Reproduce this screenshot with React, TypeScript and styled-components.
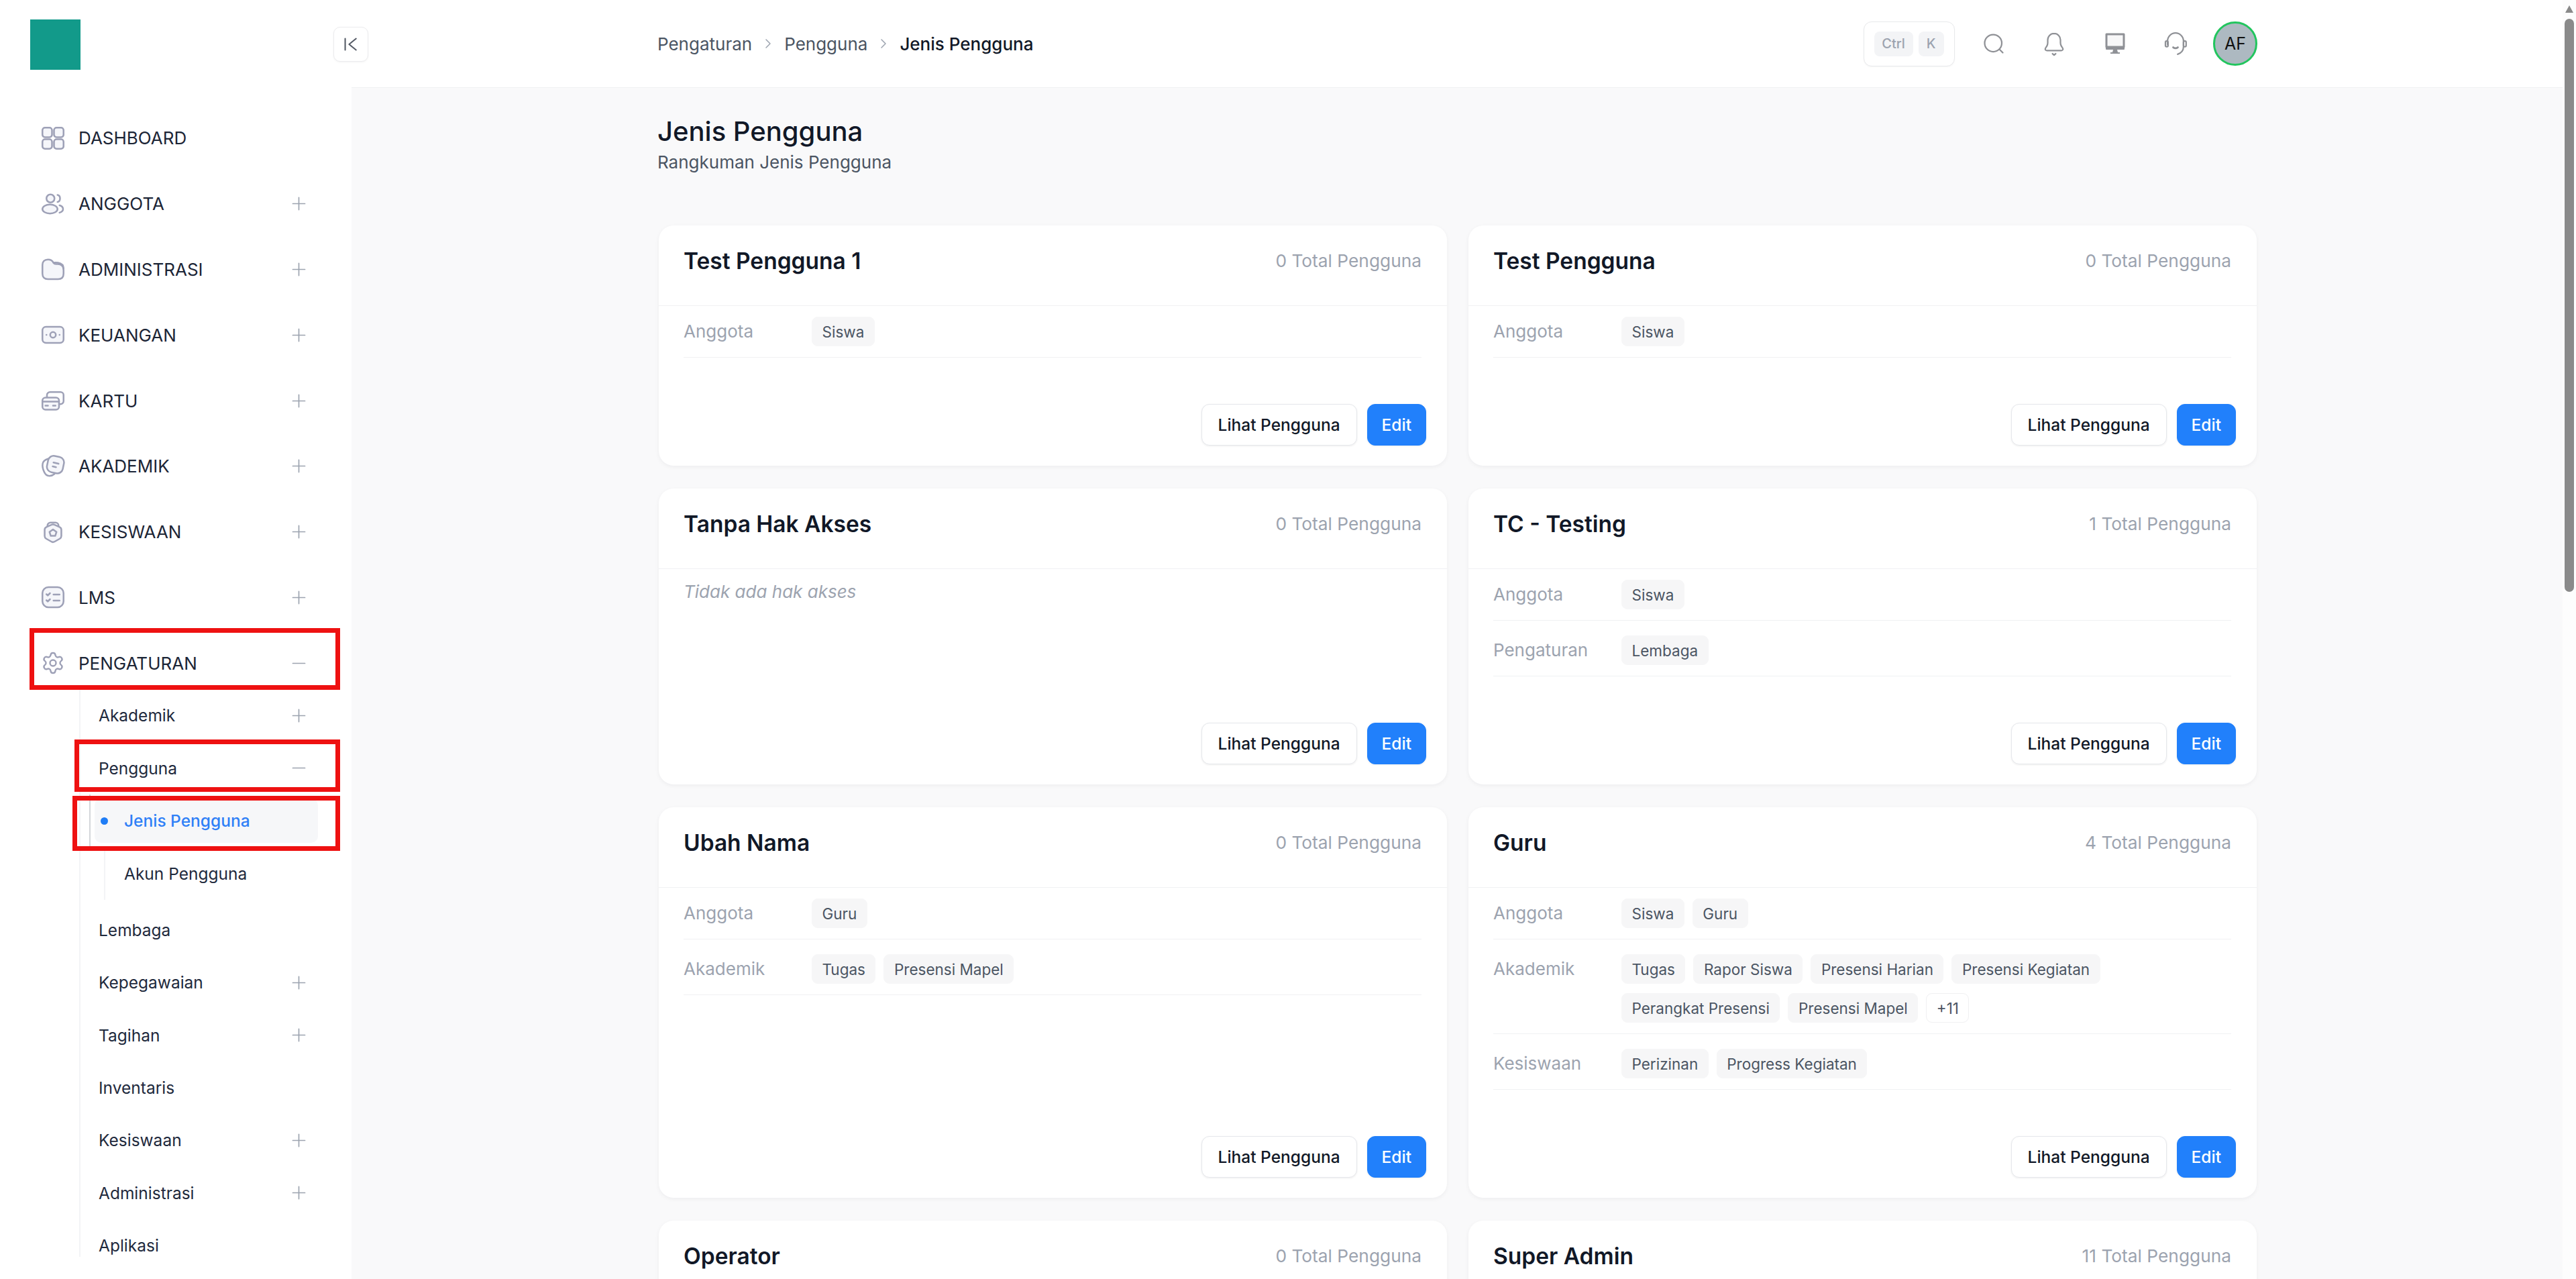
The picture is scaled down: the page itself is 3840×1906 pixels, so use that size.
import React from 'react';
import styled, { createGlobalStyle } from 'styled-components';
import { ChevronRight, Minus, Plus, Settings } from 'lucide-react';

const Global = createGlobalStyle`
  html, body { margin: 0; padding: 0; background: #f9f9fa; }
  body { font-family: Inter, "Noto Sans", sans-serif; color: #1f2937; overflow: hidden; }
  * { box-sizing: border-box; }
`;

const Page = styled.div`
  display: flex;
  width: 3840px;
  height: 1906px;
  overflow: hidden;
  background: #f9f9fa;
`;

const Sidebar = styled.aside`
  position: relative;
  flex: none;
  width: 524px;
  height: 1906px;
  background: #fff;
  z-index: 2;
`;

const LogoArea = styled.div`
  height: 157px;
  padding: 29px 0 0 45px;
`;

const Logo = styled.div`
  width: 75px;
  height: 75px;
  background: #129a8a;
`;

const Collapse = styled.button`
  position: absolute;
  left: 497px;
  top: 40px;
  width: 52px;
  height: 52px;
  padding: 0;
  display: flex;
  align-items: center;
  justify-content: center;
  background: #fff;
  border: 1px solid #ececee;
  border-radius: 10px;
  box-shadow: 0 1px 3px rgba(0, 0, 0, 0.05);
`;

const MenuRow = styled.div`
  display: flex;
  align-items: center;
  height: 97.8px;
  padding: 0 70px 0 61px;
  gap: 20px;
`;

const MenuIcon = styled.span`
  flex: none;
  width: 36px;
  height: 36px;
  display: flex;
  color: #9ea1b7;
`;

const MenuLabel = styled.span`
  flex: 1;
  font-size: 26px;
  color: #1c2536;
`;

const Toggle = styled.span`
  flex: none;
  width: 18px;
  height: 18px;
  display: flex;
  align-items: center;
  justify-content: center;
  color: #9ca3af;

  svg {
    flex: none;
  }
`;

const SubList = styled.div`
  margin: -10px 0 0 118px;
  height: 846px;
  border-left: 2px solid #f3f4f6;
`;

const SubRow = styled.div`
  display: flex;
  align-items: center;
  height: 78.4px;
  padding: 0 70px 0 27px;
`;

const SubLabel = styled.span`
  flex: 1;
  font-size: 24.5px;
  color: #1f2a3d;
`;

const NestedList = styled.div`
  margin-bottom: 6px;
`;

const ActiveWrap = styled.div`
  height: 78.4px;
  margin-left: 13px;
  padding: 6px 0 6px 6px;
  border-left: 2px solid #d4d6da;
  width: 340px;
`;

const ActivePill = styled.div`
  display: flex;
  align-items: center;
  height: 100%;
  width: 333px;
  padding-left: 9px;
  background: #f6f7f9;
  border-radius: 10px;
`;

const ActiveDot = styled.span`
  flex: none;
  width: 11px;
  height: 11px;
  border-radius: 50%;
  background: #1f7df6;
  margin-right: 24px;
`;

const ActiveLabel = styled.span`
  font-size: 24.5px;
  font-weight: 500;
  color: #2f80f7;
`;

const NestedRow = styled.div`
  display: flex;
  align-items: center;
  height: 78.4px;
  margin-left: 35px;
  padding-left: 28px;
  border-left: 2px solid #f3f4f6;
  font-size: 24.5px;
  color: #1f2a3d;
`;

const RedBox = styled.div<{ $x: number; $y: number; $w: number; $h: number }>`
  position: absolute;
  left: ${(p) => p.$x}px;
  top: ${(p) => p.$y}px;
  width: ${(p) => p.$w}px;
  height: ${(p) => p.$h}px;
  border: 7px solid #ee1111;
  pointer-events: none;
`;

const Main = styled.main`
  flex: 1;
  min-width: 0;
  height: 1906px;
  overflow: hidden;
`;

const Header = styled.header`
  display: flex;
  align-items: center;
  height: 131px;
  padding: 0 455px 0 456px;
  background: #fff;
  border-bottom: 1px solid #f0f1f2;
`;

const Crumbs = styled.nav`
  flex: 1;
  display: flex;
  align-items: center;
  gap: 12px;
`;

const Crumb = styled.span<{ $current?: boolean }>`
  font-size: 26px;
  font-weight: ${(p) => (p.$current ? 500 : 400)};
  color: ${(p) => (p.$current ? '#111827' : '#4b5563')};
`;

const CrumbSep = styled.span`
  display: flex;
  color: #9ca3af;
`;

const Actions = styled.div`
  display: flex;
  align-items: center;
  gap: 25.5px;
`;

const KeyHint = styled.div`
  display: flex;
  align-items: center;
  gap: 8px;
  width: 136px;
  height: 67px;
  padding: 0 15px;
  background: #fff;
  border: 1px solid #e8e9eb;
  border-radius: 12px;
  box-shadow: 0 1px 2px rgba(0, 0, 0, 0.04);
`;

const Key = styled.kbd<{ $w: number }>`
  width: ${(p) => p.$w}px;
  height: 37px;
  display: flex;
  align-items: center;
  justify-content: center;
  background: #f3f4f6;
  border-radius: 8px;
  font-family: Inter, sans-serif;
  font-size: 20px;
  font-weight: 500;
  color: #9ca3af;
`;

const IconButton = styled.span`
  width: 65px;
  height: 40px;
  display: flex;
  align-items: center;
  justify-content: center;
  color: #8f9196;
`;

const Avatar = styled.div`
  width: 66px;
  height: 66px;
  margin-left: -2px;
  display: flex;
  align-items: center;
  justify-content: center;
  border-radius: 50%;
  background: #adb9c1;
  border: 3px solid #22c55e;
  font-size: 25px;
  color: #111;
`;

const Content = styled.div`
  padding: 37px 454px 0 456px;
`;

const Title = styled.h1`
  margin: 0;
  font-size: 40px;
  line-height: 56px;
  font-weight: 500;
  color: #111827;
`;

const Subtitle = styled.p`
  margin: 0 0 76px;
  font-size: 26px;
  line-height: 36px;
  color: #4b5563;
`;

const Grid = styled.div`
  display: grid;
  grid-template-columns: 1175px 1175px;
  gap: 34px 32px;
  margin-left: 2px;
`;

const Card = styled.section`
  display: flex;
  flex-direction: column;
  background: #fff;
  border-radius: 22px;
  box-shadow: 0 2px 6px rgba(17, 24, 39, 0.05);
`;

const CardHead = styled.div`
  display: flex;
  align-items: flex-start;
  justify-content: space-between;
  height: 120px;
  padding: 32px 38px 0 37px;
  border-bottom: 1px solid #f0f1f3;
`;

const CardTitle = styled.h2`
  margin: 0;
  font-size: 33.5px;
  line-height: 42px;
  font-weight: 600;
  color: #111827;
`;

const CardCount = styled.span`
  font-size: 26.3px;
  line-height: 42px;
  color: #9ca3af;
`;

const CardBody = styled.div`
  flex: 1;
  display: flex;
  flex-direction: column;
  gap: 22px;
  padding: 16px 38px 0 37px;
`;

const PermRow = styled.div`
  display: flex;
  align-items: flex-start;
  padding-bottom: 16px;
  border-bottom: 1px solid #f0f1f3;
`;

const PermLabel = styled.span`
  flex: none;
  width: 191px;
  font-size: 26px;
  line-height: 44px;
  color: #9ca3af;
`;

const Chips = styled.div`
  display: flex;
  flex-wrap: wrap;
  gap: 14px 12px;
`;

const Chip = styled.span<{ $more?: boolean }>`
  height: 44px;
  padding: 0 14.5px;
  display: flex;
  align-items: center;
  border-radius: 9px;
  font-size: 22.5px;
  color: #4b5563;
  background: ${(p) => (p.$more ? '#fff' : '#f6f6f7')};
  border: 1px solid ${(p) => (p.$more ? '#f0f0f2' : '#f6f6f7')};
`;

const Empty = styled.em`
  margin-top: 2px;
  font-size: 26px;
  line-height: 32px;
  color: #9ca3af;
`;

const CardFoot = styled.div`
  display: flex;
  justify-content: flex-end;
  gap: 15px;
  padding: 69px 31px 30px 0;
`;

const Button = styled.button<{ $primary?: boolean }>`
  height: 62px;
  padding: 0 ${(p) => (p.$primary ? 21 : 24)}px;
  border-radius: 12px;
  font-family: Inter, sans-serif;
  font-size: 24.5px;
  font-weight: 500;
  color: ${(p) => (p.$primary ? '#fff' : '#111827')};
  background: ${(p) => (p.$primary ? '#2180fb' : '#fff')};
  border: 1px solid ${(p) => (p.$primary ? '#2180fb' : '#e5e7eb')};
  box-shadow: 0 1px 3px rgba(0, 0, 0, 0.07);
`;

const ScrollTrack = styled.div`
  position: relative;
  flex: none;
  width: 20px;
  height: 1906px;
  background: #fdfdfd;
`;

const ScrollArrow = styled.div`
  position: absolute;
  left: 4px;
  top: 8px;
  width: 0;
  height: 0;
  border-left: 6px solid transparent;
  border-right: 6px solid transparent;
  border-bottom: 11px solid #8a8a8a;
`;

const ScrollThumb = styled.div`
  position: absolute;
  left: 3px;
  top: 28px;
  width: 14px;
  height: 854px;
  border-radius: 7px;
  background: #8a8a8a;
`;

type SvgProps = { children: React.ReactNode; size?: number; sw?: number };
const Svg = ({ children, size = 36, sw = 1.7 }: SvgProps) => (
  <svg width={size} height={size} viewBox="0 0 24 24" fill="none" stroke="currentColor" strokeWidth={sw} strokeLinecap="round" strokeLinejoin="round">
    {children}
  </svg>
);

const tint = '#f5f6fa';

const icons: Record<string, React.ReactNode> = {
  dashboard: (
    <Svg>
      <rect x="1.5" y="1.5" width="9.5" height="9.5" rx="2.5" fill={tint} />
      <rect x="13" y="1.5" width="9.5" height="9.5" rx="2.5" fill={tint} />
      <rect x="1.5" y="13" width="9.5" height="9.5" rx="2.5" fill={tint} />
      <rect x="13" y="13" width="9.5" height="9.5" rx="2.5" fill={tint} />
    </Svg>
  ),
  users: (
    <Svg>
      <circle cx="9.5" cy="6.5" r="4" fill={tint} />
      <ellipse cx="9" cy="17" rx="7.5" ry="4.5" fill={tint} />
      <path d="M16.5 3c1.5.3 2.5 1.8 2.5 3.5S18 9.700 16.500 10" />
      <path d="M18.500 13.300c2 .6 3.500 2 3.500 3.700s-1.500 3-3.500 3.600" />
    </Svg>
  ),
  folder: (
    <Svg>
      <path d="M1.500 8C1.500 4.500 3.500 2.500 7 2.500c2.800 0 4.200.8 5.500 3.200.6 1 1.200 1.300 2.500 1.300h1.500c4 0 6 2 6 6v3.500c0 3.500-2 5.500-5.500 5.500H7c-3.500 0-5.500-2-5.500-5.500z" fill={tint} />
      <path d="M12.500 5.700c1.500-.3 3-.2 4.500 0 3 .5 5.500 2.300 5.500 5.800" />
    </Svg>
  ),
  money: (
    <Svg>
      <rect x="1.500" y="4" width="21" height="16" rx="3.500" fill={tint} />
      <circle cx="12" cy="12" r="2.800" />
      <path d="M5.500 12h.01M18.500 12h.01" />
    </Svg>
  ),
  cards: (
    <Svg>
      <path d="M6 9V6.500a3 3 0 0 1 3-3h10.500a3 3 0 0 1 3 3v6a3 3 0 0 1-3 3H18" />
      <rect x="1.500" y="9" width="16.500" height="12" rx="3" fill={tint} />
      <path d="M1.500 13h16.500M4.500 17h2.500M12 17h2.500" />
    </Svg>
  ),
  academic: (
    <Svg>
      <path d="M7 4.500C4 5.500 2 7 1.700 9.500c-.3 2 .2 5 1.300 7.500 1 2.500 3 4.500 5.500 4.500 2 0 3.500-.7 5-2" />
      <rect x="6.500" y="2" width="16" height="16.500" rx="5.500" transform="rotate(12 14.500 10)" fill={tint} />
      <path d="M12.500 8.200l5 1.200M11.700 12l3.300.8" />
    </Svg>
  ),
  student: (
    <Svg>
      <path d="M6.500 6.500V5.500a3 3 0 0 1 3-3h5a3 3 0 0 1 3 3v1" />
      <path d="M10.300 4.700a4 4 0 0 1 3.400 0l4.800 2.200a3 3 0 0 1 1.800 2.700v6.300a3 3 0 0 1-1.500 2.600l-5.300 3a3 3 0 0 1-3 0l-5.300-3a3 3 0 0 1-1.500-2.600V9.600a3 3 0 0 1 1.800-2.700z" fill={tint} />
      <path d="M12 9.300l3.500 2.500-1.300 3.900H9.800l-1.300-3.900z" />
    </Svg>
  ),
  lms: (
    <Svg>
      <rect x="1.500" y="2" width="21" height="20" rx="6" fill={tint} />
      <path d="M5.500 9l1.300 1.300L9 8M5.500 15l1.300 1.300L9 14M12.500 9.300h6M12.500 15.300h6" />
    </Svg>
  ),
};

const mainItems: [string, string, boolean][] = [
  ['dashboard', 'DASHBOARD', false],
  ['users', 'ANGGOTA', true],
  ['folder', 'ADMINISTRASI', true],
  ['money', 'KEUANGAN', true],
  ['cards', 'KARTU', true],
  ['academic', 'AKADEMIK', true],
  ['student', 'KESISWAAN', true],
  ['lms', 'LMS', true],
];

const tailItems: [string, boolean][] = [
  ['Lembaga', false],
  ['Kepegawaian', true],
  ['Tagihan', true],
  ['Inventaris', false],
  ['Kesiswaan', true],
  ['Administrasi', true],
  ['Aplikasi', false],
];

type CardData = {
  name: string;
  total: number;
  rows: [string, string[], string?][];
  empty?: boolean;
  belowFold?: boolean;
};

const cards: CardData[] = [
  { name: 'Test Pengguna 1', total: 0, rows: [['Anggota', ['Siswa']]] },
  { name: 'Test Pengguna', total: 0, rows: [['Anggota', ['Siswa']]] },
  { name: 'Tanpa Hak Akses', total: 0, rows: [], empty: true },
  { name: 'TC - Testing', total: 1, rows: [['Anggota', ['Siswa']], ['Pengaturan', ['Lembaga']]] },
  { name: 'Ubah Nama', total: 0, rows: [['Anggota', ['Guru']], ['Akademik', ['Tugas', 'Presensi Mapel']]] },
  {
    name: 'Guru',
    total: 4,
    rows: [
      ['Anggota', ['Siswa', 'Guru']],
      ['Akademik', ['Tugas', 'Rapor Siswa', 'Presensi Harian', 'Presensi Kegiatan', 'Perangkat Presensi', 'Presensi Mapel'], '+11'],
      ['Kesiswaan', ['Perizinan', 'Progress Kegiatan']],
    ],
  },
  { name: 'Operator', total: 0, rows: [], belowFold: true },
  { name: 'Super Admin', total: 11, rows: [], belowFold: true },
];

const Expand = ({ open }: { open?: boolean }) => (
  <Toggle>{open ? <Minus size={31} strokeWidth={1.3} /> : <Plus size={31} strokeWidth={1.3} />}</Toggle>
);

export default function App() {
  return (
    <Page>
      <Global />
      <Sidebar>
        <LogoArea>
          <Logo />
        </LogoArea>
        <Collapse aria-label="Tutup menu">
          <svg width="26" height="26" viewBox="0 0 20 20" fill="none" stroke="#555b66" strokeWidth="1.6" strokeLinecap="round" strokeLinejoin="round">
            <path d="M3.500 3.500v13M16 3.500L8 10l8 6.500" />
          </svg>
        </Collapse>
        {mainItems.map(([icon, label, more]) => (
          <MenuRow key={label}>
            <MenuIcon>{icons[icon]}</MenuIcon>
            <MenuLabel>{label}</MenuLabel>
            {more && <Expand />}
          </MenuRow>
        ))}
        <MenuRow>
          <MenuIcon>
            <Settings size={36} strokeWidth={1.6} />
          </MenuIcon>
          <MenuLabel>PENGATURAN</MenuLabel>
          <Expand open />
        </MenuRow>
        <SubList>
          <SubRow>
            <SubLabel>Akademik</SubLabel>
            <Expand />
          </SubRow>
          <SubRow>
            <SubLabel>Pengguna</SubLabel>
            <Expand open />
          </SubRow>
          <NestedList>
            <ActiveWrap>
              <ActivePill>
                <ActiveDot />
                <ActiveLabel>Jenis Pengguna</ActiveLabel>
              </ActivePill>
            </ActiveWrap>
            <NestedRow>Akun Pengguna</NestedRow>
          </NestedList>
          {tailItems.map(([label, more]) => (
            <SubRow key={label}>
              <SubLabel>{label}</SubLabel>
              {more && <Expand />}
            </SubRow>
          ))}
        </SubList>
        <RedBox $x={44} $y={936} $w={463} $h={92} />
        <RedBox $x={111} $y={1102} $w={396} $h={78} />
        <RedBox $x={108} $y={1186} $w={399} $h={82} />
      </Sidebar>

      <Main>
        <Header>
          <Crumbs>
            <Crumb>Pengaturan</Crumb>
            <CrumbSep>
              <ChevronRight size={24} strokeWidth={1.5} />
            </CrumbSep>
            <Crumb>Pengguna</Crumb>
            <CrumbSep>
              <ChevronRight size={24} strokeWidth={1.5} />
            </CrumbSep>
            <Crumb $current>Jenis Pengguna</Crumb>
          </Crumbs>
          <Actions>
            <KeyHint>
              <Key $w={58}>Ctrl</Key>
              <Key $w={38}>K</Key>
            </KeyHint>
            <IconButton>
              <Svg size={36} sw={1.5}>
                <circle cx="11.500" cy="11.500" r="8.500" />
                <path d="M18 18l3 3" />
              </Svg>
            </IconButton>
            <IconButton>
              <Svg size={38} sw={1.4}>
                <path d="M12 2.500c-3.300 0-6 2.700-6 6v2.800c0 1-.4 2.300-.9 3.100l-1.100 1.700c-.7 1.200-.2 2.400 1.200 2.400h13.600c1.400 0 1.900-1.200 1.200-2.400l-1.100-1.700c-.5-.8-.9-2.100-.9-3.100V8.500c0-3.300-2.700-6-6-6z" />
                <path d="M10.500 21.500l1.500 1.300 1.500-1.300" />
              </Svg>
            </IconButton>
            <IconButton>
              <svg width="30" height="32" viewBox="0 0 30 32" fill="none">
                <path d="M2 2h26v19H2z" fill="#f7f7f8" stroke="currentColor" strokeWidth="3" strokeLinejoin="round" />
                <path d="M1 20h28v4a1 1 0 0 1-1 1H2a1 1 0 0 1-1-1z" fill="currentColor" />
                <path d="M12 25h6l1 4h3v2H8v-2h3z" fill="currentColor" />
              </svg>
            </IconButton>
            <IconButton>
              <Svg size={38} sw={1.4}>
                <path d="M4.500 13V9.500C4.500 5.400 7.900 2 12 2s7.500 3.400 7.500 7.500V15c0 3.500-2.500 6-5.500 7" />
                <rect x="2.500" y="9.500" width="2.500" height="5.500" rx="1.200" />
                <rect x="19.500" y="9.500" width="2.500" height="5.500" rx="1.200" />
                <path d="M9.800 15.500c1.300 1 3.100 1 4.400 0" strokeWidth="1.800" />
              </Svg>
            </IconButton>
            <Avatar>AF</Avatar>
          </Actions>
        </Header>
        <Content>
          <Title>Jenis Pengguna</Title>
          <Subtitle>Rangkuman Jenis Pengguna</Subtitle>
          <Grid>
            {cards.map((card) => (
              <Card key={card.name}>
                <CardHead>
                  <CardTitle>{card.name}</CardTitle>
                  <CardCount>{card.total} Total Pengguna</CardCount>
                </CardHead>
                {!card.belowFold && (
                  <>
                    <CardBody>
                      {card.empty && <Empty>Tidak ada hak akses</Empty>}
                      {card.rows.map(([label, chips, more]) => (
                        <PermRow key={label}>
                          <PermLabel>{label}</PermLabel>
                          <Chips>
                            {chips.map((chip) => (
                              <Chip key={chip}>{chip}</Chip>
                            ))}
                            {more && <Chip $more>{more}</Chip>}
                          </Chips>
                        </PermRow>
                      ))}
                    </CardBody>
                    <CardFoot>
                      <Button>Lihat Pengguna</Button>
                      <Button $primary>Edit</Button>
                    </CardFoot>
                  </>
                )}
              </Card>
            ))}
          </Grid>
        </Content>
      </Main>

      <ScrollTrack>
        <ScrollArrow />
        <ScrollThumb />
      </ScrollTrack>
    </Page>
  );
}
